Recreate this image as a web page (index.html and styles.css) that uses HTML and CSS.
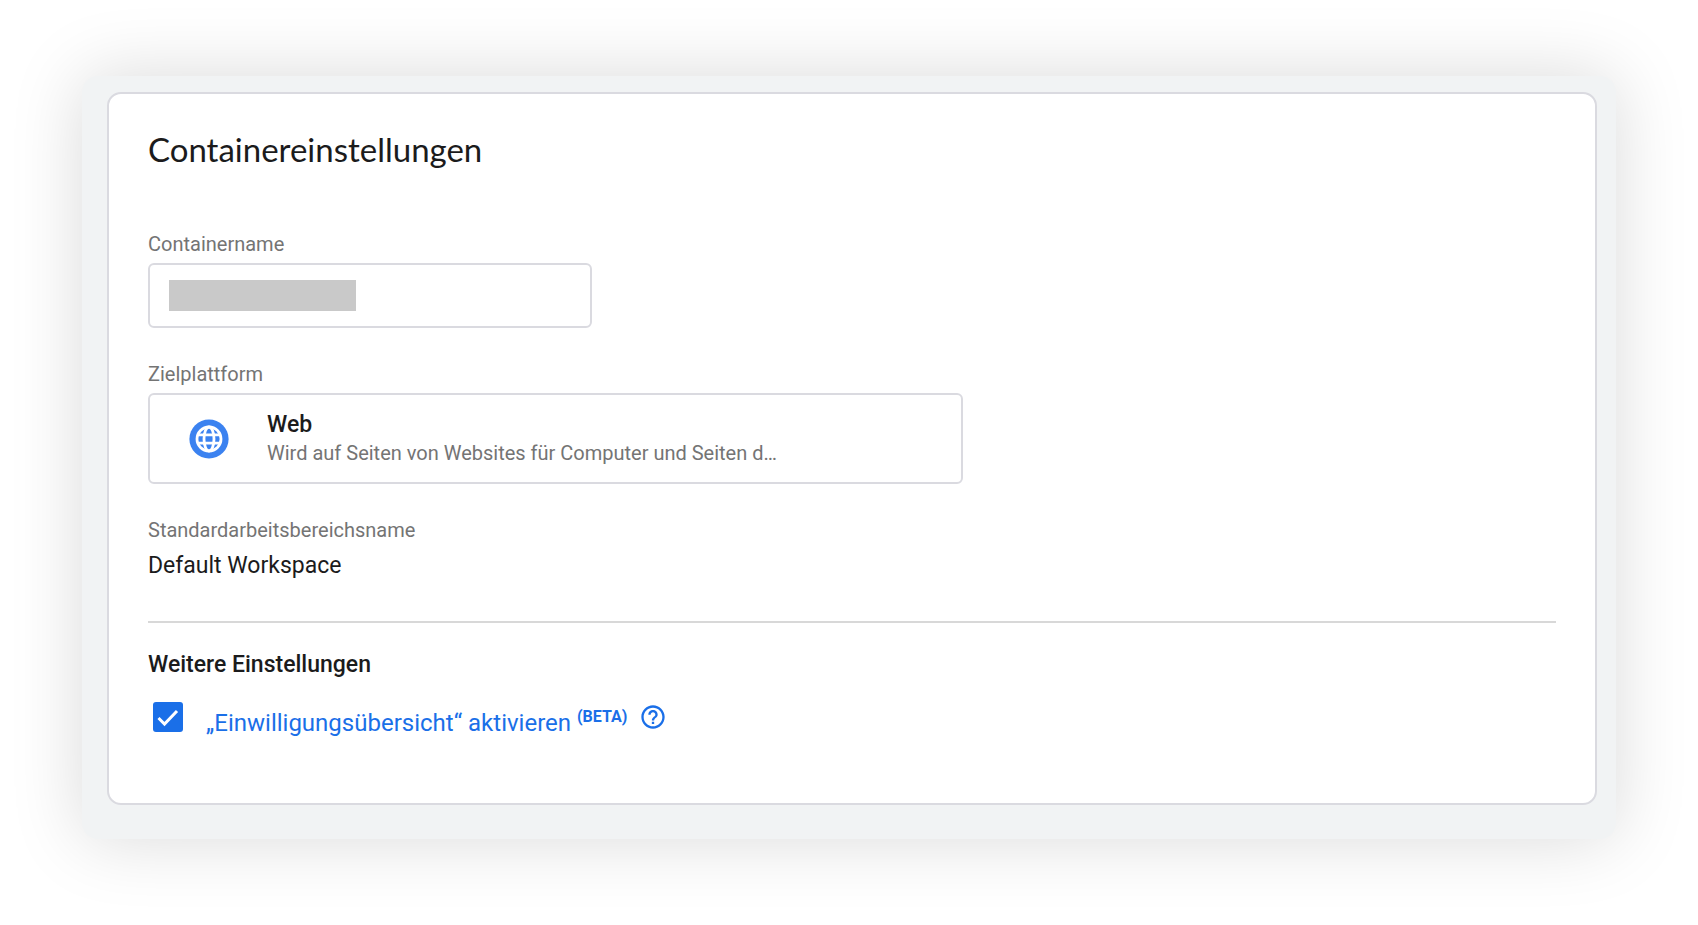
FILE: index.html
```html
<!DOCTYPE html>
<html lang="de">
<head>
    <meta charset="UTF-8">
    <meta name="viewport" content="width=device-width, initial-scale=1.0">
    <title>Containereinstellungen</title>
    <link rel="stylesheet" href="styles.css">
</head>
<body>
    <main class="panel">
        <form class="card">
            <h1>Containereinstellungen</h1>

            <div class="field">
                <label class="label" for="container-name">Containername</label>
                <input type="text" class="text-input" id="container-name" name="container-name">
            </div>

            <div class="field">
                <span class="label" id="platform-label">Zielplattform</span>
                <button type="button" class="platform" aria-labelledby="platform-label platform-name">
                    <svg class="platform-icon" viewBox="0 0 40 40" aria-hidden="true">
                        <circle cx="20" cy="20" r="19.600" fill="#3b82f0"/>
                        <g fill="none" stroke="#fff" stroke-width="2.800">
                            <circle cx="20" cy="20" r="12"/>
                            <ellipse cx="20" cy="20" rx="5" ry="12"/>
                            <path d="M8.500 15.800h23M8.500 24.200h23"/>
                        </g>
                    </svg>
                    <span class="platform-text">
                        <span class="platform-name" id="platform-name">Web</span>
                        <span class="platform-desc">Wird auf Seiten von Websites für Computer und Seiten d…</span>
                    </span>
                </button>
            </div>

            <div class="field">
                <span class="label">Standardarbeitsbereichsname</span>
                <span class="value">Default Workspace</span>
            </div>

            <hr>

            <h2>Weitere Einstellungen</h2>
            <div class="option">
                <input type="checkbox" class="checkbox" id="consent" name="consent" checked>
                <label class="option-label" for="consent">„Einwilligungsübersicht“ aktivieren <sup>(BETA)</sup></label>
                <button type="button" class="help" aria-label="Hilfe">
                    <svg viewBox="0 0 24 24" aria-hidden="true">
                        <path fill="currentColor" d="M11 18h2v-2h-2v2zm1-16C6.480 2 2 6.480 2 12s4.480 10 10 10 10-4.480 10-10S17.520 2 12 2zm0 18c-4.410 0-8-3.590-8-8s3.590-8 8-8 8 3.590 8 8-3.590 8-8 8zm0-14c-2.210 0-4 1.790-4 4h2c0-1.100.9-2 2-2s2 .9 2 2c0 2-3 1.750-3 5h2c0-2.250 3-2.500 3-5 0-2.210-1.790-4-4-4z"/>
                    </svg>
                </button>
            </div>
        </form>
    </main>
</body>
</html>
```

FILE: styles.css
```css
* {
    box-sizing: border-box;
}
body {
    margin: 0;
    padding: 76px 82px;
    background-color: #fff;
    color: #1b1b1c;
    font-family: Roboto, sans-serif;
}
.panel {
    padding: 16px 19px 34px 25px;
    border-radius: 16px;
    background-color: #f1f3f4;
    box-shadow: 0 0 72px rgba(0, 0, 0, 0.15);
}
.card {
    padding: 33px 39px 60px;
    border: 2px solid #dadae0;
    border-radius: 14px;
    background-color: #fff;
}
h1 {
    margin: 0 0 61px;
    font-family: Lato, sans-serif;
    font-size: 33px;
    font-weight: 400;
    line-height: 44px;
}
.field {
    display: flex;
    flex-direction: column;
    align-items: flex-start;
    gap: 7px;
    margin-bottom: 34px;
}
.label {
    color: #747474;
    font-size: 20px;
    line-height: 24px;
}
.text-input {
    width: 100%;
    max-width: 444px;
    height: 65px;
    padding: 0 20px;
    border: 2px solid #dadae0;
    border-radius: 6px;
    background: linear-gradient(#c9c9c9, #c9c9c9) 19px center / 187px 31px no-repeat;
    font: inherit;
    font-size: 23px;
}
.platform {
    display: flex;
    align-items: center;
    gap: 38px;
    width: 100%;
    max-width: 815px;
    height: 91px;
    padding: 0 39px;
    border: 2px solid #dadae0;
    border-radius: 6px;
    background-color: #fff;
    color: inherit;
    font: inherit;
    text-align: left;
    cursor: pointer;
}
.platform-icon {
    flex: none;
    width: 40px;
    height: 40px;
}
.platform-text {
    display: flex;
    flex-direction: column;
}
.platform-name {
    font-size: 23px;
    font-weight: 500;
    line-height: 28px;
}
.platform-desc {
    color: #747474;
    font-size: 20px;
    line-height: 28px;
}
.value {
    font-size: 23px;
    line-height: 34px;
}
hr {
    height: 2px;
    margin: 38px 0 28px;
    border: none;
    background-color: #d8d8d8;
}
h2 {
    margin: 0 0 12px;
    font-size: 23px;
    font-weight: 500;
    line-height: 28px;
}
.option {
    display: flex;
    align-items: center;
    padding-left: 5px;
    color: #1a6fe8;
}
.checkbox {
    appearance: none;
    flex: none;
    width: 30px;
    height: 30px;
    margin: 0 23px 0 0;
    border: 2px solid #747474;
    border-radius: 3px;
    cursor: pointer;
}
.checkbox:checked {
    border: none;
    background: #1a6fe8 url("data:image/svg+xml,%3Csvg xmlns='http://www.w3.org/2000/svg' viewBox='0 0 30 30'%3E%3Cpath d='M5.500 16l6 6L24 9' fill='none' stroke='%23fff' stroke-width='3'/%3E%3C/svg%3E") center / contain no-repeat;
}
.option-label {
    padding-top: 12px;
    font-size: 24px;
    line-height: 40px;
    cursor: pointer;
}
.option-label sup {
    font-size: 16px;
    font-weight: 700;
    line-height: 0;
}
.help {
    width: 28px;
    height: 28px;
    margin-left: 12px;
    padding: 0;
    border: none;
    background: none;
    color: inherit;
    cursor: pointer;
}
.help svg {
    display: block;
}
```
